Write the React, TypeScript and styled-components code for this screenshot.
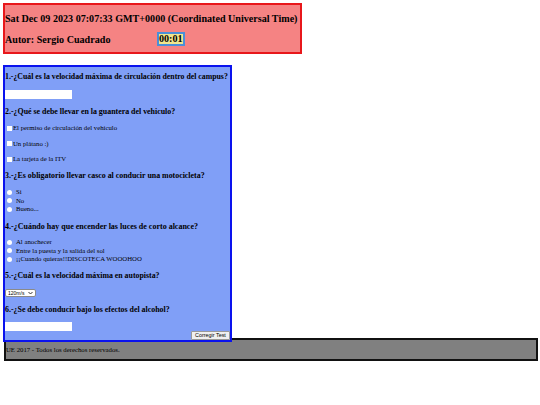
import React from 'react'
import styled, { createGlobalStyle } from 'styled-components'

const Global = createGlobalStyle`
  body {
    margin: 0;
    padding: 3px 3px 0 3px;
    font-family: "Liberation Serif", "Times New Roman", serif;
    background: #fff;
    color: #000;
  }
`

const Header = styled.header`
  width: 295px;
  border: 2px solid #e8171b;
  background: #f58383;
  padding: 3px 0 2px 0;
`

const HeaderLine = styled.div<{ $h: number }>`
  display: flex;
  align-items: center;
  font-weight: bold;
  font-size: 10.1px;
  white-space: nowrap;
  height: ${(p) => p.$h}px;
`

const Author = styled.span`
  width: 152px;
`

const Timer = styled.span`
  display: inline-block;
  background: #f2e68c;
  border: 2px solid #4a8fd8;
  padding: 0;
  line-height: 10px;
  height: 10px;
`

const Quiz = styled.form`
  position: relative;
  width: 225px;
  margin-top: 11px;
  margin-bottom: -4px;
  border: 2px solid #0a12ee;
  background: #809ff7;
  padding: 0;
  z-index: 1;
`

const Question = styled.h5<{ $top: number; $size?: number }>`
  margin: 0;
  padding-top: ${(p) => p.$top}px;
  font-size: ${(p) => p.$size ?? 7.9}px;
  font-weight: bold;
  line-height: 10px;
  white-space: nowrap;
`

const TextBox = styled.input<{ $top: number }>`
  display: block;
  width: 67px;
  height: 9px;
  border: none;
  padding: 0;
  margin: ${(p) => p.$top}px 0 0 0;
  background: #fff;
`

const Options = styled.div<{ $top: number; $gap: number }>`
  display: flex;
  flex-direction: column;
  gap: ${(p) => p.$gap}px;
  margin-top: ${(p) => p.$top}px;
  padding-left: 2px;
`

const Option = styled.label`
  display: flex;
  align-items: center;
  font-size: 6.75px;
  line-height: 8px;
  height: 8px;
  white-space: nowrap;
`

const Box = styled.span<{ $round?: boolean }>`
  width: 5px;
  height: 5px;
  flex: none;
  background: #fff;
  border-radius: ${(p) => (p.$round ? '50%' : '0')};
  margin-right: ${(p) => (p.$round ? '4px' : '1px')};
`

const Select = styled.div`
  display: flex;
  align-items: center;
  justify-content: space-between;
  width: 31px;
  height: 8px;
  margin-top: 8px;
  padding: 0 2px;
  background: #fff;
  border: 1px solid #8a8a8a;
  border-radius: 2px;
  font-family: "Liberation Sans", Arial, sans-serif;
  font-size: 5px;
  box-sizing: border-box;
`

const Button = styled.button`
  display: block;
  margin: 0 0 0 auto;
  width: 39px;
  height: 9px;
  padding: 0;
  border: 1px solid #999;
  border-radius: 1px;
  background: #f0f0f0;
  font-family: "Liberation Sans", Arial, sans-serif;
  font-size: 5.4px;
  line-height: 7px;
  color: #000;
`

const Footer = styled.footer`
  width: 530px;
  height: 19px;
  border: 2px solid #111;
  background: #808080;
  padding: 0;
  font-size: 6.75px;
  display: flex;
  align-items: center;
  margin-left: 1px;
`

const Chevron = () => (
  <svg width="5" height="4" viewBox="0 0 10 8">
    <path d="M1 2 L5 6 L9 2" stroke="#333" strokeWidth="2" fill="none" />
  </svg>
)

export default function App() {
  return (
    <>
      <Global />
      <Header>
        <HeaderLine $h={20}>Sat Dec 09 2023 07:07:33 GMT+0000 (Coordinated Universal Time)</HeaderLine>
        <HeaderLine $h={22}>
          <Author>Autor: Sergio Cuadrado</Author>
          <Timer>00:01</Timer>
        </HeaderLine>
      </Header>

      <Quiz>
        <Question $top={5} $size={7.8}>1.-¿Cuál es la velocidad máxima de circulación dentro del campus?</Question>
        <TextBox type="text" $top={8} />

        <Question $top={8}>2.-¿Qué se debe llevar en la guantera del vehiculo?</Question>
        <Options $top={7} $gap={7.5}>
          <Option><Box />El permiso de circulación del vehículo</Option>
          <Option><Box />Un plátano :)</Option>
          <Option><Box />La tarjeta de la ITV</Option>
        </Options>

        <Question $top={8}>3.-¿Es obligatorio llevar casco al conducir una motocicleta?</Question>
        <Options $top={7} $gap={0.5}>
          <Option><Box $round />Si</Option>
          <Option><Box $round />No</Option>
          <Option><Box $round />Bueno...</Option>
        </Options>

        <Question $top={9} $size={8}>4.-¿Cuándo hay que encender las luces de corto alcance?</Question>
        <Options $top={6} $gap={0.5}>
          <Option><Box $round />Al anochecer</Option>
          <Option><Box $round />Entre la puesta y la salida del sol</Option>
          <Option><Box $round />¡¡Cuando quieras!!DISCOTECA WOOOHOO</Option>
        </Options>

        <Question $top={8} $size={7.85}>5.-¿Cuál es la velocidad máxima en autopista?</Question>
        <Select>
          <span>120m/s</span>
          <Chevron />
        </Select>

        <Question $top={8}>6.-¿Se debe conducir bajo los efectos del alcohol?</Question>
        <TextBox type="text" $top={7} />
        <Button type="button">Corregir Test</Button>
      </Quiz>

      <Footer>UE 2017 - Todos los derechos reservados.</Footer>
    </>
  )
}
